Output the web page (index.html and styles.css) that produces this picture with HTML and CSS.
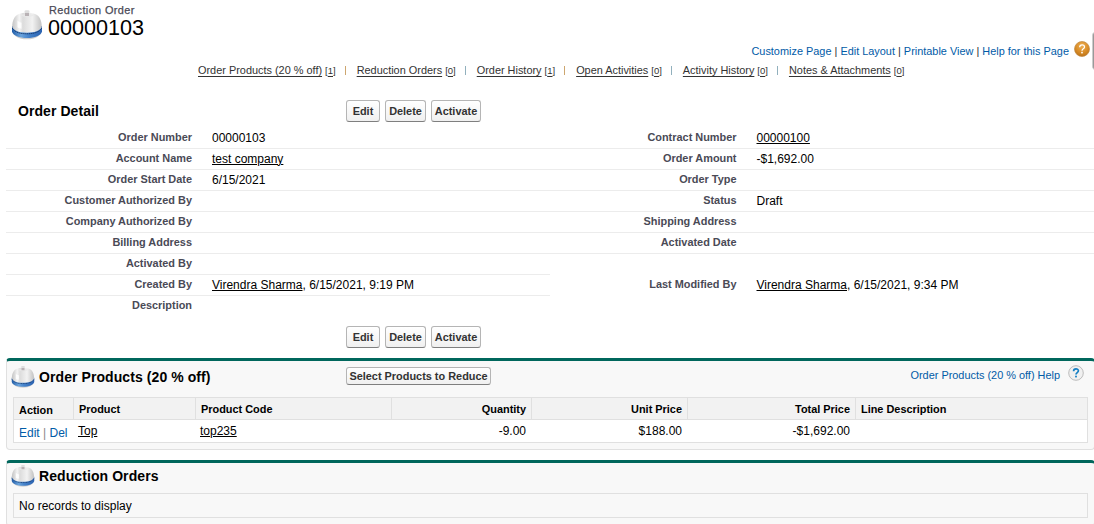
FILE: index.html
```html
<!DOCTYPE html>
<html lang="en">
<head>
<meta charset="utf-8">
<title>Reduction Order: 00000103</title>
<link rel="stylesheet" href="styles.css">
</head>
<body>
<svg class="defs" width="0" height="0" aria-hidden="true">
  <defs>
    <linearGradient id="dome" x1="0" x2="1" y1="0" y2="0">
      <stop offset="0" stop-color="#c4c4c4"/><stop offset=".14" stop-color="#dedede"/><stop offset=".24" stop-color="#f4f4f4"/><stop offset=".36" stop-color="#dcdcdc"/><stop offset=".68" stop-color="#f2f2f2"/><stop offset="1" stop-color="#c2c2c2"/>
    </linearGradient>
    <linearGradient id="base" x1="0" x2="1" y1="0" y2="0">
      <stop offset="0" stop-color="#1f5ca8"/><stop offset=".3" stop-color="#6aa3dc"/><stop offset=".55" stop-color="#4583cb"/><stop offset="1" stop-color="#2b62b0"/>
    </linearGradient>
    <radialGradient id="amber" cx=".5" cy=".3" r=".7">
      <stop offset="0" stop-color="#eeb055"/><stop offset=".6" stop-color="#d98d28"/><stop offset="1" stop-color="#bd7318"/>
    </radialGradient>
    <symbol id="bell" viewBox="0 0 32 32">
      <path d="M1.500 22c.5 5 6 8.300 14.500 8.300S30 27 30.500 22z" fill="#cfcfcf"/>
      <path d="M1 17v5.500c1 4 7 6.500 15 6.500s14-2.500 15-6.500V17z" fill="url(#base)"/>
      <path d="M1.300 19c2.700 4.300 7.700 5.800 14.700 5.800S28 23.300 30.700 19" fill="none" stroke="#173a70" stroke-width="1" stroke-dasharray="1.400 .6"/>
      <path d="M1.200 18C1.200 11.500 3.500 6.500 8 5c2-.9 5-1.300 8-1.300s6 .4 8 1.300c4.500 1.500 6.800 6.500 6.800 13-2 4-7 5.700-14.800 5.700S3.200 22 1.200 18z" fill="url(#dome)"/>
      <path d="M6.500 11.500q1.500 2 4 2.300v6q-3-.3-4-1.500z" fill="#fff" opacity=".85"/>
      <path d="M9 5.500c0 3.300 14 3.300 14 0" fill="#e9e9e9" opacity=".8"/>
      <rect x="13.500" y="1.200" width="5" height="3" rx="1.400" fill="#dedede"/>
      <rect x="14" y="4" width="4" height="3" fill="#b9b2b5"/>
    </symbol>
  </defs>
</svg>
<div class="page">
  <header class="head">
    <svg class="bell-lg"><use href="#bell"/></svg>
    <div class="titles">
      <h1 class="type">Reduction Order</h1>
      <h2 class="name">00000103</h2>
    </div>
  </header>
  <nav class="tools">
    <span class="tool-text"><a>Customize Page</a> | <a>Edit Layout</a> | <a>Printable View</a> | <a>Help for this Page</a></span>
    <svg class="help-lg" viewBox="0 0 16 16"><circle cx="8" cy="8" r="7.500" fill="url(#amber)" stroke="#c08a45" stroke-width=".7"/><path d="M5.700 6.300c0-3.300 4.800-3.100 4.800-.4C10.500 7.800 8 7.700 8 9.700" fill="none" stroke="#fff" stroke-width="1.300"/><rect x="7.200" y="10.800" width="1.600" height="1.600" fill="#fff"/></svg>
  </nav>
  <div class="side-tab"></div>
  <nav class="jump">
    <a class="jump-item"><u>Order Products (20 % off)</u><span class="count">[<u>1</u>]</span></a><i class="bar warm"></i>
    <a class="jump-item"><u>Reduction Orders</u><span class="count">[<u>0</u>]</span></a><i class="bar"></i>
    <a class="jump-item"><u>Order History</u><span class="count">[<u>1</u>]</span></a><i class="bar warm"></i>
    <a class="jump-item"><u>Open Activities</u><span class="count">[<u>0</u>]</span></a><i class="bar"></i>
    <a class="jump-item"><u>Activity History</u><span class="count">[<u>0</u>]</span></a><i class="bar"></i>
    <a class="jump-item"><u>Notes &amp; Attachments</u><span class="count">[<u>0</u>]</span></a>
  </nav>

  <section class="detail">
    <div class="detail-head">
      <h3 class="detail-title">Order Detail</h3>
      <div class="buttons"><button class="btn edit">Edit</button><button class="btn delete">Delete</button><button class="btn activate">Activate</button></div>
    </div>
    <div class="rows">
      <div class="row"><div class="label">Order Number</div><div class="value">00000103</div><div class="label">Contract Number</div><div class="value"><u>00000100</u></div></div>
      <div class="row"><div class="label">Account Name</div><div class="value"><u>test company</u></div><div class="label">Order Amount</div><div class="value">-$1,692.00</div></div>
      <div class="row"><div class="label">Order Start Date</div><div class="value">6/15/2021</div><div class="label">Order Type</div><div class="value"></div></div>
      <div class="row"><div class="label">Customer Authorized By</div><div class="value"></div><div class="label">Status</div><div class="value">Draft</div></div>
      <div class="row"><div class="label">Company Authorized By</div><div class="value"></div><div class="label">Shipping Address</div><div class="value"></div></div>
      <div class="row"><div class="label">Billing Address</div><div class="value"></div><div class="label">Activated Date</div><div class="value"></div></div>
      <div class="row half"><div class="label">Activated By</div><div class="value"></div><div class="label"></div><div class="value"></div></div>
      <div class="row half"><div class="label">Created By</div><div class="value"><u>Virendra Sharma</u>, 6/15/2021, 9:19 PM</div><div class="label">Last Modified By</div><div class="value"><u>Virendra Sharma</u>, 6/15/2021, 9:34 PM</div></div>
      <div class="row last"><div class="label">Description</div><div class="value"></div><div class="label"></div><div class="value"></div></div>
    </div>
    <div class="buttons bottom"><button class="btn edit">Edit</button><button class="btn delete">Delete</button><button class="btn activate">Activate</button></div>
  </section>

  <section class="panel products">
    <div class="panel-head">
      <svg class="bell-sm"><use href="#bell"/></svg>
      <h3 class="panel-title">Order Products (20 % off)</h3>
      <button class="btn select">Select Products to Reduce</button>
      <a class="panel-help">Order Products (20 % off) Help</a>
      <svg class="help-sm" viewBox="0 0 16 16"><circle cx="8" cy="8" r="7.300" fill="#f0f0f0" stroke="#bcbcbc"/><path d="M5.600 6.200c0-3.200 4.800-3 4.800-.4C10.400 7.700 8 7.600 8 9.600" fill="none" stroke="#1680c4" stroke-width="1.700"/><rect x="7.100" y="10.700" width="1.800" height="1.700" fill="#1680c4"/></svg>
    </div>
    <div class="grid">
      <div class="th action">Action</div><div class="th">Product</div><div class="th">Product Code</div><div class="th num">Quantity</div><div class="th num">Unit Price</div><div class="th num">Total Price</div><div class="th">Line Description</div>
      <div class="td action"><a>Edit</a> | <a>Del</a></div><div class="td"><u>Top</u></div><div class="td"><u>top235</u></div><div class="td num">-9.00</div><div class="td num">$188.00</div><div class="td num">-$1,692.00</div><div class="td"></div>
    </div>
  </section>

  <section class="panel reductions">
    <div class="panel-head">
      <svg class="bell-sm"><use href="#bell"/></svg>
      <h3 class="panel-title">Reduction Orders</h3>
    </div>
    <div class="empty">No records to display</div>
  </section>
</div>
</body>
</html>
```
FILE: styles.css
```css
* { box-sizing: border-box; }
body { margin: 0; background: #fff; color: #000; font-family: "Liberation Sans", Arial, sans-serif; font-size: 12px; overflow: hidden; }
h1, h2, h3 { margin: 0; }
u { text-underline-offset: 1px; text-decoration-thickness: 1px; }
.defs { position: absolute; }
.page { position: relative; width: 1094px; height: 524px; overflow: hidden; }

.head { display: flex; height: 43px; padding: 3px 0 0 11px; }
.bell-lg { width: 32px; height: 32px; margin-top: 6px; }
.titles { margin-left: 5px; }
.type { font-size: 10.92px; line-height: 14px; color: #4a4a56; padding-left: 1px; font-weight: 400; letter-spacing: .38px; -webkit-text-stroke: .25px #4a4a56; }
.name { font-size: 21.600px; line-height: 22px; font-weight: 400; }

.tools { display: flex; justify-content: flex-end; height: 20px; padding-right: 4px; font-size: 10.92px; color: #333; }
.tool-text { line-height: 16px; white-space: pre; margin-right: 5px; }
.tools a, .panel-help, .td.action a { color: #015ba7; }
.help-lg { width: 16px; height: 16px; margin-top: -2px; }
.side-tab { position: absolute; left: 1092px; top: 32px; width: 6px; height: 38px; background: #999; border-left: 1px solid #ccc; border-radius: 4px 0 0 4px; }

.jump { display: flex; height: 37px; padding-left: 198px; font-size: 10.92px; line-height: 14px; color: #333; white-space: nowrap; }
.jump u { text-underline-offset: 2px; }
.count { font-size: 9.500px; margin-left: 3px; }
.bar { width: 1px; height: 9px; margin: 3px 11px 0 9px; background: #91b0bd; }
.bar.warm { background: #cda66f; }

.detail { height: 258px; padding-left: 6px; }
.detail-head { display: flex; height: 28px; }
.detail-title { width: 340px; padding-left: 12px; font-size: 14px; line-height: 22px; letter-spacing: .07px; }
.buttons { display: flex; gap: 5px; }
.buttons.bottom { padding: 9px 0 0 340px; }
.btn { height: 22px; padding: 0; font: bold 10.92px "Liberation Sans", Arial, sans-serif; color: #333; background: linear-gradient(#fff, #f0f0f0); border: 1px solid #b5b5b5; border-bottom-color: #7f7f7f; border-radius: 3px; white-space: nowrap; }
.edit { width: 34px; }
.delete { width: 41px; }
.activate { width: 50px; }
.row { display: grid; grid-template-columns: 186px 358px 186.500px 1fr; height: 21px; border-bottom: 1px solid #ececec; }
.row.half { border-bottom: 0; background: linear-gradient(#ececec, #ececec) 0 20px / 544px 1px no-repeat; }
.row.last { border-bottom: 0; }
.label { font-size: 10.92px; font-weight: 700; line-height: 18px; color: #4a4a56; text-align: right; white-space: nowrap; }
.value { padding-left: 20px; line-height: 20px; white-space: nowrap; }

.panel { margin-left: 6px; width: 1089px; background: #f8f8f8; border: 1px solid #e0e0e0; border-top: 3px solid #00675c; border-radius: 4px; padding: 0 6px; }
.products { height: 92px; margin-bottom: 10px; }
.reductions { height: 66px; }
.panel-head { display: flex; }
.products .panel-head { height: 36px; }
.reductions .panel-head { height: 30px; }
.bell-sm { width: 24px; height: 24px; margin: 4px 0 0 -2px; }
.reductions .bell-sm { margin-top: 1px; }
.panel-title { width: 311px; padding-left: 4px; font-size: 14px; line-height: 32px; letter-spacing: .08px; }
.reductions .panel-title { line-height: 26px; }
.select { width: 145px; height: 18px; margin-top: 6px; }
.panel-help { margin-left: auto; font-size: 10.92px; line-height: 28px; }
.help-sm { width: 16px; height: 16px; margin: 4px 4px 0 8px; }
.grid { display: grid; grid-template-columns: 60px 122px 196px 140px 156px 168px 231px; grid-template-rows: 22px 23px; height: 46px; width: 1075px; border: 1px solid #e0e0e0; background: #fff; }
.th { font-size: 10.92px; font-weight: 700; line-height: 22px; padding: 0 5px; background: #f2f2f2; border-bottom: 1px solid #e0e0e0; border-right: 1px solid #e0e0e0; white-space: nowrap; }
.th:nth-child(7) { border-right: 0; }
.th.action { line-height: 24px; }
.td { line-height: 23px; padding: 0 6px 0 4px; }
.th.action, .td.action { padding-left: 5px; padding-right: 0; }
.td.action { line-height: 26px; color: #888; white-space: nowrap; }
.num { text-align: right; }
.empty { height: 25px; width: 1075px; padding-left: 5px; line-height: 24px; border: 1px solid #e0e0e0; }
```
